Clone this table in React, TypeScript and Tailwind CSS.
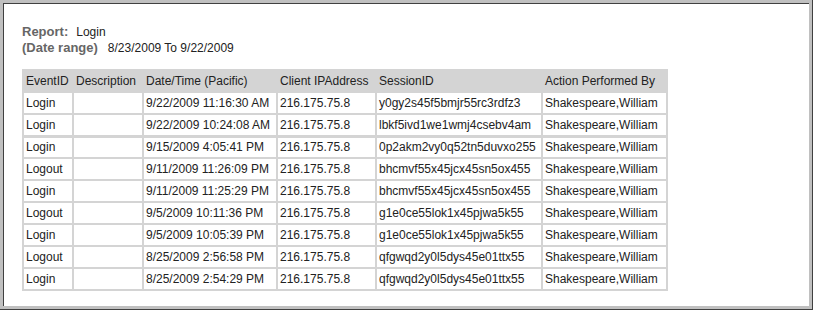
const rows = [
  ["Login", "", "9/22/2009 11:16:30 AM", "216.175.75.8", "y0gy2s45f5bmjr55rc3rdfz3", "Shakespeare,William"],
  ["Login", "", "9/22/2009 10:24:08 AM", "216.175.75.8", "lbkf5ivd1we1wmj4csebv4am", "Shakespeare,William"],
  ["Login", "", "9/15/2009 4:05:41 PM", "216.175.75.8", "0p2akm2vy0q52tn5duvxo255", "Shakespeare,William"],
  ["Logout", "", "9/11/2009 11:26:09 PM", "216.175.75.8", "bhcmvf55x45jcx45sn5ox455", "Shakespeare,William"],
  ["Login", "", "9/11/2009 11:25:29 PM", "216.175.75.8", "bhcmvf55x45jcx45sn5ox455", "Shakespeare,William"],
  ["Logout", "", "9/5/2009 10:11:36 PM", "216.175.75.8", "g1e0ce55lok1x45pjwa5k55", "Shakespeare,William"],
  ["Login", "", "9/5/2009 10:05:39 PM", "216.175.75.8", "g1e0ce55lok1x45pjwa5k55", "Shakespeare,William"],
  ["Logout", "", "8/25/2009 2:56:58 PM", "216.175.75.8", "qfgwqd2y0l5dys45e01ttx55", "Shakespeare,William"],
  ["Login", "", "8/25/2009 2:54:29 PM", "216.175.75.8", "qfgwqd2y0l5dys45e01ttx55", "Shakespeare,William"],
];

const headers = ["EventID", "Description", "Date/Time (Pacific)", "Client IPAddress", "SessionID", "Action Performed By"];
const widths = ["w-[48px]", "w-[68px]", "w-[132px]", "w-[97px]", "w-[164px]", "w-[123px]"];

export default function App() {
  return (
    <div className="h-[310px] w-[813px] bg-[#c0c0c0] pt-[3px] pl-[3px] pr-[3px] pb-[3px] border-r border-b border-[#404040] font-['Liberation_Sans',Arial,sans-serif] text-[12px] text-[#222]">
      <div className="h-full border-l border-t border-[#404040] bg-white pl-[18px] pt-[20px]">
        <div className="leading-[15px]">
          <div>
            <span className="font-bold text-[13px] text-[#666]">Report:</span>
            <span className="ml-[8px]">Login</span>
          </div>
          <div>
            <span className="font-bold text-[13px] text-[#666]">(Date range)</span>
            <span className="ml-[10px]">8/23/2009 To 9/22/2009</span>
          </div>
        </div>

        <table className="mt-[13px] border-separate border-spacing-[2px] bg-[#d4d4d4] leading-[20px]">
          <thead>
            <tr>
              {headers.map((h, i) => (
                <th key={h} className={`${widths[i]} h-[20px] px-[2px] text-left font-normal whitespace-nowrap`}>{h}</th>
              ))}
            </tr>
          </thead>
          <tbody>
            {rows.map((r, ri) => (
              <tr key={ri}>
                {r.map((c, ci) => (
                  <td
                    key={ci}
                    className={ri === 2 ? "h-[20px] px-[2px] bg-white whitespace-nowrap border-t border-[#d4d4d4] leading-[19px]" : "h-[20px] px-[2px] bg-white whitespace-nowrap"}
                  >
                    {c}
                  </td>
                ))}
              </tr>
            ))}
          </tbody>
        </table>
      </div>
    </div>
  );
}
